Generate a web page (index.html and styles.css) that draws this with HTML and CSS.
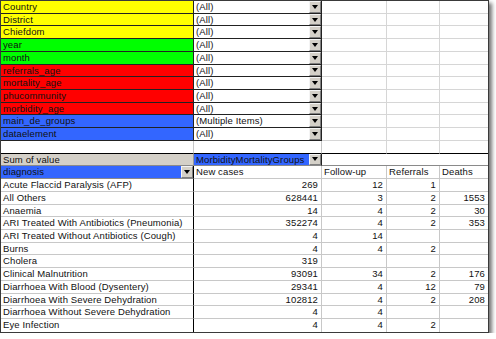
FILE: index.html
```html
<!DOCTYPE html>
<html lang="en">
<head>
 <meta charset="UTF-8">
 <meta name="viewport" content="width=device-width, initial-scale=1.0">
 <title>Pivot table</title>
 <link rel="stylesheet" href="styles.css">
</head>
<body>

<div class="sheet">

 <!-- page fields -->
 <div class="row page">
  <div class="cell lbl yellow">Country</div>
  <div class="cell pick"><span class="txt">(All)</span><span class="dd"></span></div>
  <div class="cell"></div><div class="cell"></div><div class="cell"></div>
 </div>
 <div class="row page">
  <div class="cell lbl yellow">District</div>
  <div class="cell pick"><span class="txt">(All)</span><span class="dd"></span></div>
  <div class="cell"></div><div class="cell"></div><div class="cell"></div>
 </div>
 <div class="row page">
  <div class="cell lbl yellow">Chiefdom</div>
  <div class="cell pick"><span class="txt">(All)</span><span class="dd"></span></div>
  <div class="cell"></div><div class="cell"></div><div class="cell"></div>
 </div>
 <div class="row page">
  <div class="cell lbl green">year</div>
  <div class="cell pick"><span class="txt">(All)</span><span class="dd"></span></div>
  <div class="cell"></div><div class="cell"></div><div class="cell"></div>
 </div>
 <div class="row page">
  <div class="cell lbl green">month</div>
  <div class="cell pick"><span class="txt">(All)</span><span class="dd"></span></div>
  <div class="cell"></div><div class="cell"></div><div class="cell"></div>
 </div>
 <div class="row page">
  <div class="cell lbl red">referrals_age</div>
  <div class="cell pick"><span class="txt">(All)</span><span class="dd"></span></div>
  <div class="cell"></div><div class="cell"></div><div class="cell"></div>
 </div>
 <div class="row page">
  <div class="cell lbl red">mortality_age</div>
  <div class="cell pick"><span class="txt">(All)</span><span class="dd"></span></div>
  <div class="cell"></div><div class="cell"></div><div class="cell"></div>
 </div>
 <div class="row page">
  <div class="cell lbl red">phucommunity</div>
  <div class="cell pick"><span class="txt">(All)</span><span class="dd"></span></div>
  <div class="cell"></div><div class="cell"></div><div class="cell"></div>
 </div>
 <div class="row page">
  <div class="cell lbl red">morbidity_age</div>
  <div class="cell pick"><span class="txt">(All)</span><span class="dd"></span></div>
  <div class="cell"></div><div class="cell"></div><div class="cell"></div>
 </div>
 <div class="row page">
  <div class="cell lbl blue">main_de_groups</div>
  <div class="cell pick"><span class="txt">(Multiple Items)</span><span class="dd"></span></div>
  <div class="cell"></div><div class="cell"></div><div class="cell"></div>
 </div>
 <div class="row page">
  <div class="cell lbl blue">dataelement</div>
  <div class="cell pick"><span class="txt">(All)</span><span class="dd"></span></div>
  <div class="cell"></div><div class="cell"></div><div class="cell"></div>
 </div>

 <!-- spacer row -->
 <div class="row gap">
  <div class="cell"></div><div class="cell"></div>
  <div class="cell"></div><div class="cell"></div><div class="cell"></div>
 </div>

 <!-- pivot head -->
 <div class="row sum">
  <div class="cell grey">Sum of value</div>
  <div class="cell pick blue"><span class="txt">MorbidityMortalityGroups</span><span class="dd"></span></div>
  <div class="cell span"></div>
 </div>
 <div class="row head">
  <div class="cell pick blue"><span class="txt">diagnosis</span><span class="dd"></span></div>
  <div class="cell">New cases</div>
  <div class="cell">Follow-up</div>
  <div class="cell">Referrals</div>
  <div class="cell">Deaths</div>
 </div>

 <!-- data -->
 <div class="row data"><div class="cell">Acute Flaccid Paralysis (AFP)</div><div class="cell">269</div><div class="cell">12</div><div class="cell">1</div><div class="cell"></div></div>
 <div class="row data"><div class="cell">All Others</div><div class="cell">628441</div><div class="cell">3</div><div class="cell">2</div><div class="cell">1553</div></div>
 <div class="row data"><div class="cell">Anaemia</div><div class="cell">14</div><div class="cell">4</div><div class="cell">2</div><div class="cell">30</div></div>
 <div class="row data"><div class="cell">ARI Treated With Antibiotics (Pneumonia)</div><div class="cell">352274</div><div class="cell">4</div><div class="cell">2</div><div class="cell">353</div></div>
 <div class="row data"><div class="cell">ARI Treated Without Antibiotics (Cough)</div><div class="cell">4</div><div class="cell">14</div><div class="cell"></div><div class="cell"></div></div>
 <div class="row data"><div class="cell">Burns</div><div class="cell">4</div><div class="cell">4</div><div class="cell">2</div><div class="cell"></div></div>
 <div class="row data"><div class="cell">Cholera</div><div class="cell">319</div><div class="cell"></div><div class="cell"></div><div class="cell"></div></div>
 <div class="row data"><div class="cell">Clinical Malnutrition</div><div class="cell">93091</div><div class="cell">34</div><div class="cell">2</div><div class="cell">176</div></div>
 <div class="row data"><div class="cell">Diarrhoea With Blood (Dysentery)</div><div class="cell">29341</div><div class="cell">4</div><div class="cell">12</div><div class="cell">79</div></div>
 <div class="row data"><div class="cell">Diarrhoea With Severe Dehydration</div><div class="cell">102812</div><div class="cell">4</div><div class="cell">2</div><div class="cell">208</div></div>
 <div class="row data"><div class="cell">Diarrhoea Without Severe Dehydration</div><div class="cell">4</div><div class="cell">4</div><div class="cell"></div><div class="cell"></div></div>
 <div class="row data"><div class="cell">Eye Infection</div><div class="cell">4</div><div class="cell">4</div><div class="cell">2</div><div class="cell"></div></div>

</div>

</body>
</html>
```

FILE: styles.css
```css
body{
 margin: 0;
 background: #fff;
 font-family: "Liberation Sans", Arial, sans-serif;
 font-size: 9.5px;
 letter-spacing: 0.12px;
 color: #111;
}

.sheet{
 width: 489px;
 box-sizing: border-box;
 border: 1px solid #3a3a3a;
 background: #fff;
 box-shadow: 3px 3px 4px rgba(0,0,0,0.55);
}

.row{
 display: grid;
 grid-template-columns: 193px 128px 65px 53px 48px;
 height: 12.73px;
}

.cell{
 box-sizing: border-box;
 border-right: 1px solid #d6d6d6;
 border-bottom: 1px solid #d6d6d6;
 line-height: 11.5px;
 padding: 0 2px;
 white-space: nowrap;
 overflow: hidden;
 min-width: 0;
}
.row .cell:last-child{ border-right: none; }

/* colours */
.yellow{ background: #ffff00; }
.green{ background: #00ff00; }
.red{ background: #ff0000; }
.blue{ background: #3366ff; }
.grey{ background: #d4d0c8; }

/* page field rows */
.page .lbl{
 border-right-color: #222;
 border-bottom-color: #222;
}
.page .pick{
 border-right-color: #222;
 border-bottom-color: #222;
}

.pick{
 display: flex;
 align-items: stretch;
 padding-right: 0;
}
.pick .txt{
 flex: 1;
 overflow: hidden;
}
.dd{
 width: 12px;
 box-sizing: border-box;
 background: #d4d0c8;
 border: 1px solid;
 border-color: #f4f4f4 #808080 #808080 #f4f4f4;
 display: flex;
 align-items: center;
 justify-content: center;
}
.dd::after{
 content: "";
 border-left: 3px solid transparent;
 border-right: 3px solid transparent;
 border-top: 4px solid #000;
}

/* spacer */
.gap .cell{ border-bottom-color: #000; }
.gap .cell:nth-child(1),
.gap .cell:nth-child(2){ border-right-color: #c8c8c8; }

/* sum row */
.sum .grey{ border-right-color: #9a9a9a; border-bottom-color: #8a8a8a; }
.sum .pick{ border-right-color: #222; border-bottom-color: #8a8a8a; }
.sum .span{
 grid-column: span 3;
 border-bottom-color: #8a8a8a;
}

/* header + data */
.head .cell,
.data .cell{ border-color: #c8c8c8; }
.head .cell:first-child,
.data .cell:first-child{ border-right-color: #000; }
.head .cell:first-child{ border-bottom-color: #8a8a8a; }

.data .cell:not(:first-child){
 text-align: right;
 padding-right: 3px;
}
.data:last-child .cell{ border-bottom: none; }
```
